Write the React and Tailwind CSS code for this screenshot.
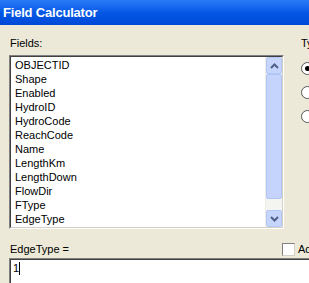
import React from "react";

const fields = [
  "OBJECTID",
  "Shape",
  "Enabled",
  "HydroID",
  "HydroCode",
  "ReachCode",
  "Name",
  "LengthKm",
  "LengthDown",
  "FlowDir",
  "FType",
  "EdgeType",
];

const Chevron = ({ up }) => (
  <svg width="9" height="6" viewBox="0 0 9 6">
    <path
      d={up ? "M1 5 L4.5 1.5 L8 5" : "M1 1 L4.5 4.5 L8 1"}
      fill="none"
      stroke="#4d6185"
      strokeWidth="2"
    />
  </svg>
);

const Radio = ({ checked }) => (
  <div className="w-[13px] h-[13px] shrink-0 rounded-full border border-[#555] bg-white flex items-center justify-center">
    {checked && <div className="w-[5px] h-[5px] rounded-full bg-black" />}
  </div>
);

const App = () => {
  return (
    <div
      className="w-[309px] h-[283px] overflow-hidden bg-[#ece9d8] flex flex-col text-[11px] text-black"
      style={{ fontFamily: "'Liberation Sans', Arial, sans-serif" }}
    >
      <div className="h-[25px] shrink-0 bg-gradient-to-b from-[#2a7bf7] via-[#0558e6] to-[#0048d8] flex items-center pl-[3px]">
        <span className="text-white font-bold text-[13px] tracking-[-0.2px]">
          Field Calculator
        </span>
      </div>

      <div className="flex pl-[9px] pt-[12px] overflow-hidden">
        <div className="w-[275px] shrink-0">
          <div className="pl-[1px] leading-[13px] h-[18px]">Fields:</div>
          <div className="h-[174px] flex border border-t-[#808080] border-l-[#808080] border-b-white border-r-white">
            <div className="flex-1 flex border border-t-[#404040] border-l-[#404040] border-b-[#d4d0c8] border-r-[#d4d0c8] bg-white">
              <div className="flex-1 pl-[4px] pt-[1px]">
                {fields.map((f) => (
                  <div key={f} className="h-[14px] leading-[14px]">
                    {f}
                  </div>
                ))}
              </div>
              <div className="w-[17px] flex flex-col bg-[#f4f4f0] border-l border-[#eeede5]">
                <div className="h-[17px] rounded-[2px] bg-[#c5d5fc] border border-[#b4c8f6] flex items-center justify-center">
                  <Chevron up />
                </div>
                <div className="h-[125px] rounded-[2px] bg-[#c4d4fd] border border-[#b0c4f5]" />
                <div className="flex-1" />
                <div className="h-[17px] rounded-[2px] bg-[#c5d5fc] border border-[#b4c8f6] flex items-center justify-center">
                  <Chevron />
                </div>
              </div>
            </div>
          </div>
        </div>
        <div className="pl-[17px] shrink-0">
          <div className="leading-[13px] h-[25px] whitespace-nowrap">Type:</div>
          <div className="flex flex-col gap-[11px]">
            <Radio checked />
            <Radio />
            <Radio />
          </div>
        </div>
      </div>

      <div className="flex items-center pl-[10px] pt-[12px] h-[29px] overflow-hidden shrink-0">
        <span className="w-[272px] shrink-0">EdgeType =</span>
        <div className="w-[13px] h-[13px] shrink-0 bg-white border border-t-[#808080] border-l-[#808080] border-b-[#d4d0c8] border-r-[#d4d0c8]" />
        <span className="pl-[3px] shrink-0 whitespace-nowrap">Advanced</span>
      </div>

      <div className="ml-[9px] flex-1 border border-t-[#808080] border-l-[#808080] border-r-0 border-b-0">
        <div className="h-full bg-white border border-t-[#404040] border-l-[#404040] border-r-0 border-b-0 pl-[2px] pt-[1px] flex items-start">
          <span className="leading-[14px]">1</span>
          <span className="w-px h-[13px] bg-black mt-[1px]" />
        </div>
      </div>
    </div>
  );
};

export default App;
